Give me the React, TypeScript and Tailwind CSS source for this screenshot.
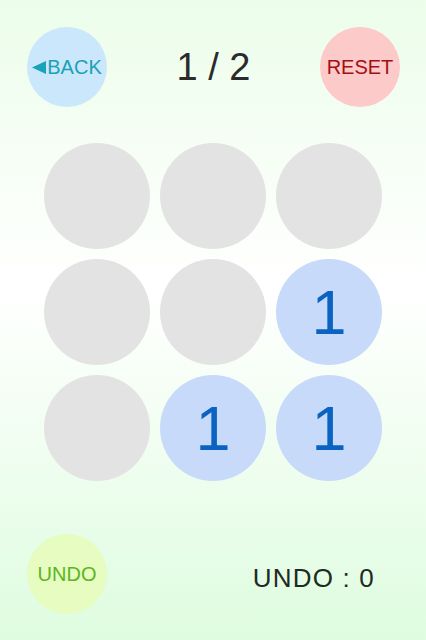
import React from 'react';

const cells: (number | null)[] = [null, null, null, null, null, 1, null, 1, 1];

export default function App() {
  return (
    <div className="flex h-[640px] w-full flex-col bg-linear-to-b from-[#ecfdea] via-white via-45% to-[#defcdf] font-['Liberation_Sans',Arial,sans-serif]">
      <div className="grid grid-cols-[80px_1fr_80px] items-center pl-[27px] pr-[26px] pt-[27px]">
        <button className="flex h-[80px] w-[80px] items-center justify-center rounded-full bg-[#cbe7fb] text-[20px] text-[#1aa2b6]">
          <svg width="14" height="13" viewBox="0 0 14 13" className="mr-px">
            <polygon points="0,6.5 14,0 14,13" fill="#1aa2b6" />
          </svg>
          BACK
        </button>
        <div className="text-center text-[38px] leading-none text-[#2b2b2b]">1 / 2</div>
        <button className="flex h-[80px] w-[80px] items-center justify-center rounded-full bg-[#fdcaca] text-[20px] text-[#a30f12]">
          RESET
        </button>
      </div>

      <div className="mx-auto mt-[36px] grid w-[338px] grid-cols-3 gap-[10px]">
        {cells.map((v, i) => (
          <div
            key={i}
            className={
              v
                ? 'flex h-[106px] w-[106px] items-center justify-center rounded-full bg-[#c8dafa] text-[63px] leading-none text-[#0b63c1]'
                : 'h-[106px] w-[106px] rounded-full bg-[#e3e3e3]'
            }
          >
            {v}
          </div>
        ))}
      </div>

      <div className="mt-[53px] flex items-center pl-[27px]">
        <button className="flex h-[80px] w-[80px] items-center justify-center rounded-full bg-[#e6fcc0] text-[20px] text-[#5db51f]">
          UNDO
        </button>
        <div className="ml-auto mr-[51px] pt-[8px] text-[26px] leading-none tracking-[1.2px] text-[#1f2a22]">
          UNDO : 0
        </div>
      </div>
    </div>
  );
}
